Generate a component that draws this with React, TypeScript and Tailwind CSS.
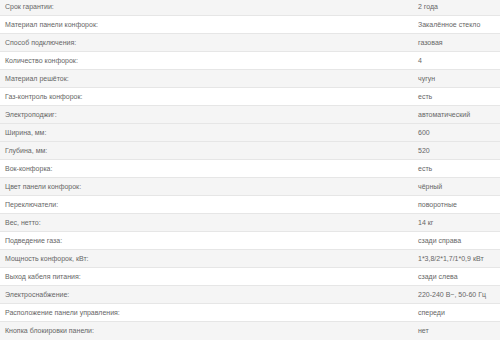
const specs: [string, string][] = [
  ['Срок гарантии:', '2 года'],
  ['Материал панели конфорок:', 'Закалённое стекло'],
  ['Способ подключения:', 'газовая'],
  ['Количество конфорок:', '4'],
  ['Материал решёток:', 'чугун'],
  ['Газ-контроль конфорок:', 'есть'],
  ['Электроподжиг:', 'автоматический'],
  ['Ширина, мм:', '600'],
  ['Глубина, мм:', '520'],
  ['Вок-конфорка:', 'есть'],
  ['Цвет панели конфорок:', 'чёрный'],
  ['Переключатели:', 'поворотные'],
  ['Вес, нетто:', '14 кг'],
  ['Подведение газа:', 'сзади справа'],
  ['Мощность конфорок, кВт:', '1*3,8/2*1,7/1*0,9 кВт'],
  ['Выход кабеля питания:', 'сзади слева'],
  ['Электроснабжение:', '220-240 В~, 50-60 Гц'],
  ['Расположение панели управления:', 'спереди'],
  ['Кнопка блокировки панели:', 'нет'],
];

export default function App() {
  return (
    <div className="w-[500px] h-[345px] overflow-hidden bg-white font-['Liberation_Sans',Arial,sans-serif] text-[7px] text-[#666]">
      <table className="w-full -mt-[3px] border-collapse">
        <tbody>
          {specs.map(([k, v], i) => (
            <tr
              key={k}
              className={`h-[18px] border-t border-[#e6e6e6] ${i % 2 === 0 || i === 7 ? 'bg-[#f5f5f5]' : 'bg-white'}`}
            >
              <td className="pl-[5px] pt-[1px] align-middle">{k}</td>
              <td className="w-[82px] pt-[1px] align-middle">{v}</td>
            </tr>
          ))}
        </tbody>
      </table>
    </div>
  );
}
